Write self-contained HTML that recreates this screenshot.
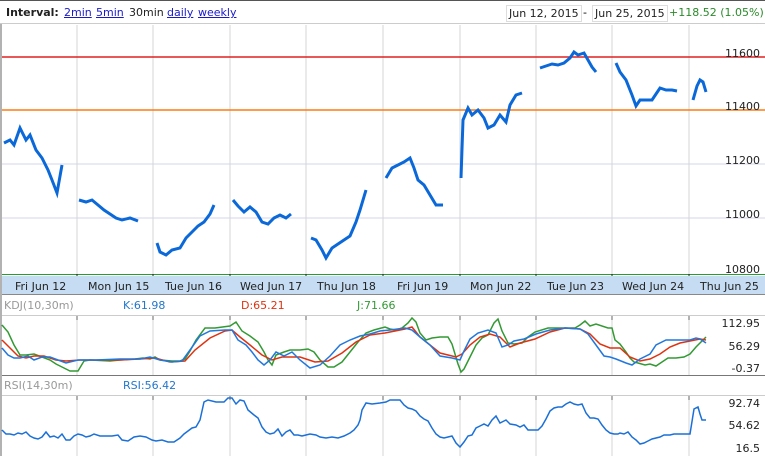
<!DOCTYPE html>
<html><head><meta charset="utf-8"><style>
body{margin:0;width:765px;height:456px;overflow:hidden;background:#fff;font-family:Verdana,"DejaVu Sans",sans-serif;}
.top{position:absolute;left:0;top:0;width:765px;height:24px;border-top:1px solid #555;border-bottom:1px solid #ccc;box-sizing:border-box;font-size:11px;}
.top b{position:absolute;left:6px;top:5px;color:#222}
.top a{position:absolute;top:5px;color:#1a1acc;text-decoration:underline}
.dt{position:absolute;top:4px;height:15px;border:1px solid #ddd;font-size:11px;line-height:15px;padding:0 2px;color:#222}
</style></head><body>
<div class="top"><b>Interval:</b>
<a style="left:64px">2min</a><a style="left:96px">5min</a><span style="position:absolute;left:129px;top:5px;color:#222">30min</span><a style="left:167px">daily</a><a style="left:198px">weekly</a>
<div class="dt" style="left:506px">Jun 12, 2015</div><span style="position:absolute;left:583px;top:5px">-</span><div class="dt" style="left:592px">Jun 25, 2015</div>
<span style="position:absolute;left:669px;top:5px;color:#2a8a2a">+118.52 (1.05%)</span></div>
<svg width="765" height="456" style="position:absolute;left:0;top:0" font-family="Verdana,DejaVu Sans,sans-serif" font-size="11">
<line x1="1" y1="24" x2="1" y2="456" stroke="#666"/>
<g stroke="#d6d6d6">
<path d="M77 25V274M153 25V274M230 25V274M306 25V274M383 25V274M460 25V274M536 25V274M612 25V274M689 25V274"/>
<path d="M77 316V375M153 316V375M230 316V375M306 316V375M383 316V375M460 316V375M536 316V375M612 316V375M689 316V375"/>
<path d="M77 396V456M153 396V456M230 396V456M306 396V456M383 396V456M460 396V456M536 396V456M612 396V456M689 396V456"/>
</g>
<g stroke="#d4d4ee"><path d="M2 164H765M2 218H765"/></g>
<line x1="2" y1="57" x2="765" y2="57" stroke="#e02020" stroke-width="1.5"/>
<line x1="2" y1="110" x2="765" y2="110" stroke="#ff7a10" stroke-width="1.5"/>
<line x1="2" y1="274.5" x2="765" y2="274.5" stroke="#20a030"/>
<g stroke="#222"><path d="M77 274V279M153 274V279M230 274V279M306 274V279M383 274V279M460 274V279M536 274V279M612 274V279M689 274V279"/></g>
<rect x="2" y="276" width="763" height="18" fill="#c5dcf3"/>
<g fill="#222" font-size="11">
<text x="15" y="290">Fri Jun 12</text><text x="88" y="290">Mon Jun 15</text><text x="165" y="290">Tue Jun 16</text><text x="240" y="290">Wed Jun 17</text><text x="317" y="290">Thu Jun 18</text><text x="397" y="290">Fri Jun 19</text><text x="470" y="290">Mon Jun 22</text><text x="547" y="290">Tue Jun 23</text><text x="622" y="290">Wed Jun 24</text><text x="700" y="290">Thu Jun 25</text>
<text x="760" y="57" text-anchor="end">11600</text><text x="760" y="110" text-anchor="end">11400</text><text x="760" y="164" text-anchor="end">11200</text><text x="760" y="218" text-anchor="end">11000</text><text x="760" y="273" text-anchor="end">10800</text>
<text x="760" y="327" text-anchor="end">112.95</text><text x="760" y="350" text-anchor="end">56.29</text><text x="760" y="372" text-anchor="end">-0.37</text>
<text x="760" y="407" text-anchor="end">92.74</text><text x="760" y="429" text-anchor="end">54.62</text><text x="760" y="452" text-anchor="end">16.5</text>
</g>
<line x1="2" y1="294.5" x2="765" y2="294.5" stroke="#888"/>
<text x="4" y="309" fill="#999">KDJ(10,30m)</text><text x="123" y="309" fill="#2277cc">K:61.98</text><text x="241" y="309" fill="#dd3311">D:65.21</text><text x="357" y="309" fill="#339933">J:71.66</text>
<line x1="2" y1="315.5" x2="765" y2="315.5" stroke="#ccc"/>
<line x1="2" y1="375.5" x2="765" y2="375.5" stroke="#777"/>
<text x="4" y="389" fill="#999">RSI(14,30m)</text><text x="123" y="389" fill="#2277cc">RSI:56.42</text>
<line x1="2" y1="395.5" x2="765" y2="395.5" stroke="#ccc"/>
<g stroke="#666"><path d="M77 316V320M153 316V320M230 316V320M306 316V320M383 316V320M460 316V320M536 316V320M612 316V320M689 316V320M77 396V400M153 396V400M230 396V400M306 396V400M383 396V400M460 396V400M536 396V400M612 396V400M689 396V400"/></g>
<g fill="none" stroke="#0a68d8" stroke-width="3">
<polyline points="4,143 10,140 14,145 20,128 26,140 30,135 36,150 42,158 48,170 52,180 57,193 62,165"/>
<polyline points="79,200 86,202 92,200 98,205 104,210 110,214 116,218 122,220 130,218 138,221"/>
<polyline points="157,243 160,252 166,255 172,250 180,248 186,238 192,232 198,226 204,222 210,214 214,205"/>
<polyline points="233,200 238,206 244,212 250,207 256,212 262,222 268,224 274,218 280,215 286,218 291,214"/>
<polyline points="311,238 316,240 322,250 326,258 332,248 338,244 344,240 350,236 356,222 360,210 366,190"/>
<polyline points="386,178 392,168 398,165 404,162 410,158 414,168 418,180 424,185 430,195 436,205 443,205"/>
<polyline points="461,178 463,120 468,108 472,115 478,110 484,118 488,128 494,125 500,115 506,122 510,105 516,95 522,93"/>
<polyline points="540,68 546,66 552,64 558,65 564,63 570,58 574,52 578,55 584,53 588,60 592,67 596,72"/>
<polyline points="616,63 620,72 626,80 632,95 636,106 640,100 646,100 652,100 656,94 660,88 666,90 672,90 677,91"/>
<polyline points="693,100 697,86 700,80 703,82 706,92"/>
</g>
<g fill="none" stroke-width="1.5">
<polyline stroke="#339933" points="2,325 8,332 14,345 20,355 26,355 34,354 42,357 50,360 56,364 62,367 70,371 78,371 84,361 90,360 110,361 120,360 135,359 143,358 150,359 155,357 160,360 172,361 180,361 185,359 190,351 196,340 205,328 215,328 230,326 236,322 242,331 250,336 258,342 264,352 268,360 272,365 276,355 284,352 290,350 300,350 308,349 314,352 320,360 328,367 334,367 342,362 350,352 358,342 366,333 374,330 385,327 390,329 396,330 402,328 408,323 412,318 416,322 420,333 426,340 432,338 440,337 448,337 452,344 458,364 461,372 464,369 470,357 476,345 482,338 488,335 494,323 498,319 502,331 508,343 514,344 522,343 528,337 535,332 548,328 560,328 575,328 580,325 585,321 590,326 596,324 608,328 612,328 615,340 620,344 626,352 630,358 634,362 638,363 645,365 650,364 656,366 662,362 668,358 676,358 684,357 690,354 696,347 700,343 706,337"/>
<polyline stroke="#dd3311" points="2,340 10,348 18,356 26,358 34,356 44,356 56,360 66,361 80,360 96,360 120,360 140,359 155,358 170,362 185,361 195,350 210,338 225,331 232,330 240,337 250,345 262,355 272,360 282,357 300,357 315,362 328,361 342,353 356,342 370,335 385,333 395,331 405,329 412,327 420,337 430,345 440,353 456,357 462,354 470,345 480,337 490,334 500,337 510,347 520,343 535,339 550,332 565,328 580,329 590,334 600,344 610,348 620,348 630,357 640,361 650,359 660,354 670,347 680,343 690,341 700,339 706,340"/>
<polyline stroke="#2277dd" points="2,348 8,355 14,358 20,358 28,356 34,360 42,357 50,357 58,360 66,363 78,360 96,360 120,359 140,359 150,357 160,360 172,362 182,361 190,350 200,336 210,331 225,330 232,330 238,340 246,345 252,352 258,360 264,365 270,360 276,352 284,356 292,352 300,360 310,368 320,365 330,356 340,345 350,340 360,336 370,334 380,331 390,330 405,328 412,330 420,337 430,345 440,356 452,358 460,360 464,351 470,339 478,333 488,330 496,333 502,347 508,345 514,341 524,339 536,334 550,330 565,328 580,329 588,334 596,345 604,356 610,357 616,359 626,363 632,365 640,359 650,354 656,345 666,340 680,340 690,340 696,338 700,339 706,343"/>
<polyline stroke="#1a70d8" points="2,430 6,434 10,434 14,435 18,433 22,434 26,432 30,436 34,438 38,439 42,437 46,432 50,437 54,436 58,438 62,434 66,440 70,440 74,436 78,434 82,435 86,437 90,436 94,434 100,436 106,436 112,436 118,435 122,440 128,441 134,437 140,436 146,437 152,440 156,441 162,440 168,442 174,442 180,438 184,434 188,431 192,428 196,427 200,420 204,402 208,400 216,402 224,402 228,398 232,398 236,404 240,400 244,401 248,410 254,415 258,418 262,427 266,432 270,434 274,433 278,429 282,436 286,432 290,430 294,435 298,435 302,436 306,435 310,434 316,435 320,437 326,438 332,437 338,438 344,436 350,433 354,430 358,425 360,420 362,410 366,403 372,404 380,403 386,402 390,400 394,400 400,400 404,405 408,408 412,409 416,411 420,416 424,419 428,421 432,428 436,434 440,437 444,438 448,437 452,436 456,443 460,447 464,442 468,436 472,435 476,428 480,426 484,424 488,426 492,420 496,416 500,423 506,420 510,424 516,425 520,427 524,425 528,430 532,430 538,430 542,426 546,419 550,411 554,408 558,407 562,407 566,404 570,402 574,404 578,405 582,404 586,413 590,418 594,418 598,419 602,425 606,430 610,433 614,434 618,434 620,433 624,434 628,432 632,437 636,440 640,444 644,443 648,441 652,439 656,438 660,437 664,435 670,435 674,434 680,434 686,434 690,434 694,409 698,407 700,414 702,420 706,420"/>
</g>
</svg>
</body></html>
